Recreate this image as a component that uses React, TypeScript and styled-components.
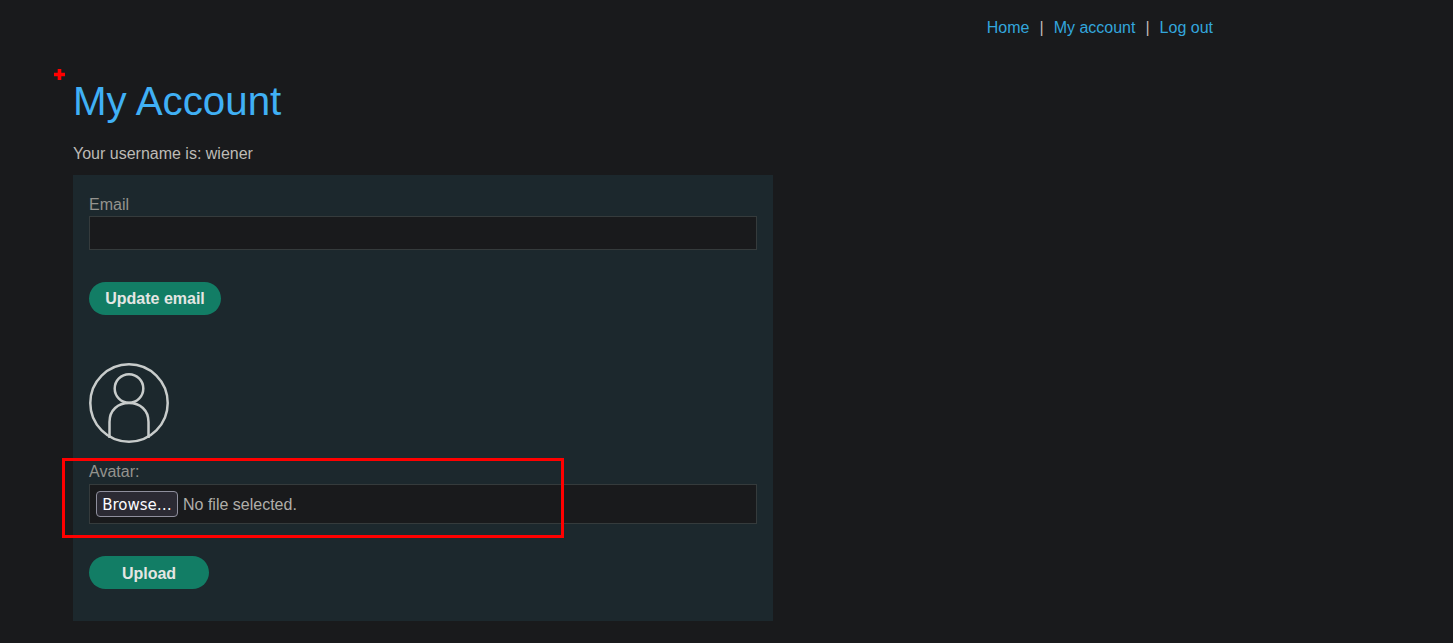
import React from "react";
import styled, { createGlobalStyle } from "styled-components";

const Global = createGlobalStyle`
  html, body {
    margin: 0;
    background: #191a1c;
  }
  body {
    font-family: "Liberation Sans", Arial, sans-serif;
    font-size: 16px;
    color: #bdbbb6;
  }
`;

const Page = styled.div`
  position: relative;
  height: 643px;
  overflow: hidden;
  padding: 0 0 0 73px;
  box-sizing: border-box;
`;

const Nav = styled.nav`
  display: flex;
  justify-content: flex-end;
  width: 1140px;
  height: 56px;
  align-items: center;
  line-height: 18px;
`;

const NavLink = styled.a`
  color: #33a6dc;
  text-decoration: none;
`;

const NavSep = styled.span`
  margin: 0 10px;
  color: #bdbbb6;
`;

const Title = styled.h1`
  margin: 0;
  padding-top: 19px;
  font-size: 40.3px;
  line-height: 54px;
  font-weight: 400;
  color: #40b0f5;
`;

const Username = styled.p`
  margin: 0;
  padding-top: 16px;
  line-height: 18px;
  height: 30px;
`;

const Card = styled.form`
  width: 700px;
  height: 446px;
  box-sizing: border-box;
  padding: 21px 16px 0;
  background: #1c282d;
`;

const Label = styled.label<{ $height: number }>`
  display: block;
  height: ${(p) => p.$height}px;
  line-height: 18px;
  color: #94938e;
`;

const TextField = styled.input`
  display: block;
  width: 100%;
  height: 34px;
  box-sizing: border-box;
  background: #191a1c;
  border: 1px solid #353b3c;
  outline: none;
  color: #bdbbb6;
`;

const Action = styled.button<{ $width: number; $textTop?: number }>`
  display: block;
  width: ${(p) => p.$width}px;
  height: 33px;
  margin-top: 32px;
  padding: ${(p) => p.$textTop ?? 0}px 0 0;
  border: none;
  border-radius: 17px;
  background: #127d65;
  color: #e4e6e3;
  font-family: inherit;
  font-size: 16px;
  font-weight: 700;
`;

const Avatar = styled.svg`
  display: block;
  width: 80px;
  height: 80px;
  margin: 48px 0 20px;
`;

const FileBox = styled.div`
  display: flex;
  align-items: center;
  gap: 5px;
  height: 40px;
  box-sizing: border-box;
  padding: 0 6px;
  background: #191a1c;
  border: 1px solid #353b3c;
`;

const Browse = styled.span`
  display: flex;
  align-items: center;
  justify-content: center;
  width: 82px;
  height: 26px;
  box-sizing: border-box;
  padding-top: 1px;
  background: #2b2a33;
  border: 1px solid #8f8f9d;
  border-radius: 4px;
  color: #fbfbfe;
  font-family: "DejaVu Sans", sans-serif;
  font-size: 15px;
`;

const NoFile = styled.span`
  padding-top: 2px;
  color: #b0aeaa;
`;

const Highlight = styled.div`
  position: absolute;
  left: 62px;
  top: 458px;
  width: 502px;
  height: 80px;
  box-sizing: border-box;
  border: 3px solid #ff0000;
`;

const Cross = styled.svg`
  position: absolute;
  left: 54px;
  top: 69px;
  width: 11px;
  height: 11px;
`;

export default function App() {
  return (
    <Page>
      <Global />
      <Nav>
        <NavLink href="#">Home</NavLink>
        <NavSep>|</NavSep>
        <NavLink href="#">My account</NavLink>
        <NavSep>|</NavSep>
        <NavLink href="#">Log out</NavLink>
      </Nav>
      <Title>My Account</Title>
      <Username>Your username is: wiener</Username>
      <Card onSubmit={(e) => e.preventDefault()}>
        <Label $height={20}>Email</Label>
        <TextField type="email" />
        <Action $width={132}>Update email</Action>
        <Avatar viewBox="0 0 80 80" fill="none" stroke="#c8cccb" strokeWidth="2.5">
          <circle cx="40" cy="40" r="38.7" />
          <circle cx="40" cy="25.5" r="14.3" />
          <path d="M20.5 75 V59 C20.5 47 29 40 40 40 C51 40 59.5 47 59.5 59 V75" />
        </Avatar>
        <Label $height={21}>Avatar:</Label>
        <FileBox>
          <Browse>Browse…</Browse>
          <NoFile>No file selected.</NoFile>
        </FileBox>
        <Action $width={120} $textTop={2}>Upload</Action>
      </Card>
      <Cross viewBox="0 0 11 11">
        <path d="M3.7 0H7.3V3.7H11V7.3H7.3V11H3.7V7.3H0V3.7H3.7Z" fill="#ff0000" />
      </Cross>
      <Highlight />
    </Page>
  );
}
